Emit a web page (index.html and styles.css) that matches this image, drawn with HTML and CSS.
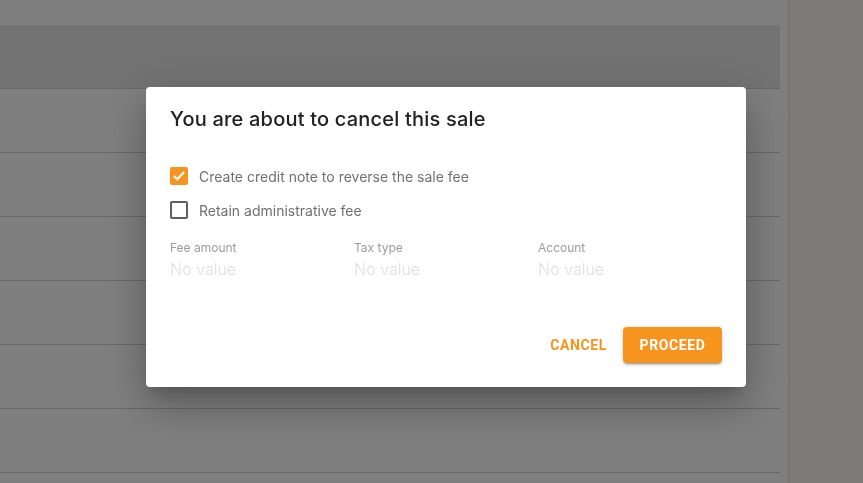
FILE: index.html
```html
<!DOCTYPE html>
<html lang="en">
<head>
<meta charset="utf-8">
<title>Cancel sale</title>
<link rel="stylesheet" href="styles.css">
</head>
<body>
<div class="page">
  <div class="main">
    <div class="topbar"></div>
    <div class="table">
      <div class="thead"></div>
      <div class="row"></div>
      <div class="row"></div>
      <div class="row"></div>
      <div class="row"></div>
      <div class="row"></div>
      <div class="row"></div>
    </div>
  </div>
  <div class="side"></div>
</div>
<div class="overlay">
  <div class="dialog">
    <h2 class="title">You are about to cancel this sale</h2>
    <div class="options">
      <label class="check">
        <span class="box checked">
          <svg viewBox="0 0 18 18" width="18" height="18"><path d="M3.8 9l3.4 3.3 7-7.2" fill="none" stroke="#fff" stroke-width="2.2"/></svg>
        </span>
        <span class="check-label">Create credit note to reverse the sale fee</span>
      </label>
      <label class="check">
        <span class="box"></span>
        <span class="check-label">Retain administrative fee</span>
      </label>
    </div>
    <div class="fields">
      <div class="field"><div class="field-label">Fee amount</div><div class="field-value">No value</div></div>
      <div class="field"><div class="field-label">Tax type</div><div class="field-value">No value</div></div>
      <div class="field"><div class="field-label">Account</div><div class="field-value">No value</div></div>
    </div>
    <div class="actions">
      <button class="btn btn-text">CANCEL</button>
      <button class="btn btn-primary">PROCEED</button>
    </div>
  </div>
</div>
</body>
</html>
```
FILE: styles.css
```css
* { box-sizing: border-box; }
html, body { margin: 0; padding: 0; height: 100%; }
body {
  font-family: "Inter", "Noto Sans", sans-serif;
  background: #fff;
  overflow: hidden;
}
.page {
  display: flex;
  height: 483px;
}
.main {
  width: 789px;
  border-right: 1px solid #dedede;
  padding-right: 8px;
}
.topbar { height: 25px; }
.thead {
  height: 64px;
  background: #e6e6e6;
  border-bottom: 1px solid #d2d2d2;
}
.row {
  height: 64px;
  border-bottom: 1px solid #d2d2d2;
}
.side {
  flex: 1;
  background: #f8f6f0;
}
.overlay {
  position: fixed;
  inset: 0;
  background: rgba(0, 0, 0, 0.5);
  display: flex;
  align-items: flex-start;
  justify-content: center;
  padding-top: 87px;
  padding-left: 29px;
}
.dialog {
  width: 600px;
  height: 300px;
  background: #fff;
  border-radius: 4px;
  padding: 20px 24px 24px;
  display: flex;
  flex-direction: column;
  box-shadow: 0 11px 15px -7px rgba(0,0,0,.2), 0 24px 38px 3px rgba(0,0,0,.14), 0 9px 46px 8px rgba(0,0,0,.12);
}
.title {
  margin: 0;
  font-size: 20px;
  font-weight: 500;
  color: #212121;
  line-height: 24px;
  letter-spacing: 0.2px;
}
.options {
  margin-top: 36px;
  display: flex;
  flex-direction: column;
  gap: 16px;
}
.check {
  display: flex;
  align-items: center;
  gap: 11px;
  height: 18px;
}
.box {
  width: 18px;
  height: 18px;
  border: 2px solid #5f5f5f;
  border-radius: 2px;
  display: flex;
  align-items: center;
  justify-content: center;
}
.box.checked {
  background: #f7941d;
  border-color: #f7941d;
}
.box svg { flex: none; }
.check-label {
  font-size: 14px;
  color: #707070;
}
.fields {
  margin-top: 21px;
  display: grid;
  grid-template-columns: repeat(3, 1fr);
}
.field-label {
  font-size: 12px;
  color: #9c9c9c;
  line-height: 16px;
}
.field-value {
  font-size: 16px;
  color: #dedede;
  line-height: 22px;
  margin-top: 2px;
  font-weight: 300;
}
.actions {
  margin-top: auto;
  display: flex;
  justify-content: flex-end;
  align-items: center;
  gap: 8px;
}
.btn {
  font-family: "Roboto", sans-serif;
  font-size: 14px;
  font-weight: 700;
  letter-spacing: 0.6px;
  height: 36px;
  border: none;
  border-radius: 4px;
  padding: 0 16px;
  cursor: pointer;
}
.btn-text {
  background: transparent;
  color: #f7941d;
  padding: 0 8px;
}
.btn-primary {
  background: #f7941d;
  color: #fff;
  min-width: 99px;
  padding: 0 15px;
  box-shadow: 0 3px 1px -2px rgba(0,0,0,.2), 0 2px 2px 0 rgba(0,0,0,.14), 0 1px 5px 0 rgba(0,0,0,.12);
}
```
